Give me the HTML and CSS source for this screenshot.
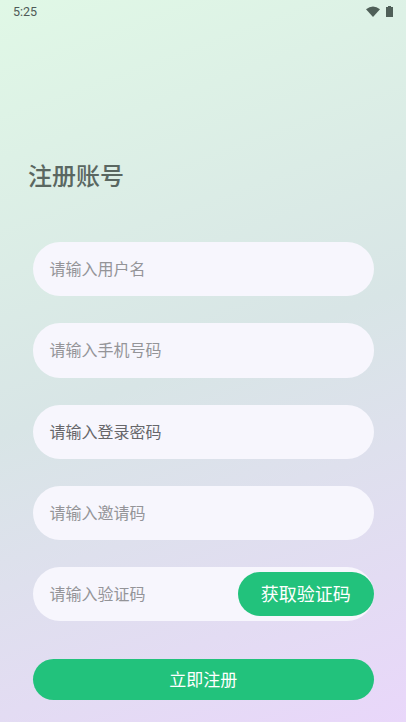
FILE: index.html
```html
<!DOCTYPE html>
<html lang="zh-CN">
  <head>
    <meta charset="UTF-8" />
    <meta name="viewport" content="width=device-width, initial-scale=1.0" />
    <title>注册账号</title>
    <link rel="stylesheet" href="styles.css">
  </head>
  <body>
    <div class="status-bar">
      <span class="time">5:25</span>
      <div class="status-icons">
        <svg class="wifi" width="14" height="11" viewBox="0 0 14 11">
          <path d="M0 3.2 Q7 -2 14 3.2 L7 11 Z" fill="#4f5f58" />
        </svg>
        <svg class="battery" width="7" height="11" viewBox="0 0 7 11">
          <path d="M2 0 H5 V1 H7 V11 H0 V1 H2 Z" fill="#4f5f58" />
        </svg>
      </div>
    </div>

    <h1 class="title">注册账号</h1>

    <form class="form">
      <div class="field"><span class="hint">请输入用户名</span></div>
      <div class="field"><span class="hint">请输入手机号码</span></div>
      <div class="field"><span class="hint dark">请输入登录密码</span></div>
      <div class="field"><span class="hint">请输入邀请码</span></div>
      <div class="field">
        <span class="hint">请输入验证码</span>
        <button type="button" class="code-btn">获取验证码</button>
      </div>
      <button type="button" class="submit">立即注册</button>
    </form>
  </body>
</html>
```

FILE: styles.css
```css
html,
body {
  height: 100%;
}

body {
  margin: 0;
  width: 406px;
  height: 722px;
  overflow: hidden;
  font-family: "Noto Sans CJK SC", "Roboto", sans-serif;
  background: linear-gradient(160deg, #e0f8e6 0%, #d8e5e6 50%, #e9d7fa 100%);
}

.status-bar {
  height: 23px;
  padding: 0 13px;
  display: flex;
  align-items: center;
  justify-content: space-between;
}

.time {
  font-family: "Roboto", sans-serif;
  font-size: 12.5px;
  color: #4f5a56;
}

.status-icons {
  display: flex;
  align-items: center;
  gap: 6px;
}

.status-icons svg {
  display: block;
}

.title {
  margin: 135px 0 0 28px;
  height: 34px;
  line-height: 34px;
  font-size: 24px;
  font-weight: 500;
  color: #5a6761;
}

.form {
  margin: 50px 32px 0 32.5px;
  display: flex;
  flex-direction: column;
  gap: 27px;
}

.field {
  height: 54.25px;
  box-sizing: border-box;
  padding-left: 17px;
  display: flex;
  align-items: center;
  justify-content: space-between;
  background: #f7f6fd;
  border-radius: 27px;
}

.hint {
  font-size: 16px;
  line-height: 22px;
  margin-top: -2px;
  color: #949498;
}

.hint.dark {
  color: #66666a;
}

.code-btn {
  width: 136.5px;
  height: 44px;
  padding: 0 0 3px;
  border: none;
  border-radius: 22px;
  background: #22c27c;
  color: #fff;
  font-family: inherit;
  font-size: 18px;
}

.submit {
  height: 41px;
  margin-top: 11px;
  padding: 0 0 2px;
  border: none;
  border-radius: 21px;
  background: #22c27c;
  color: #fff;
  font-family: inherit;
  font-size: 17px;
}
```
